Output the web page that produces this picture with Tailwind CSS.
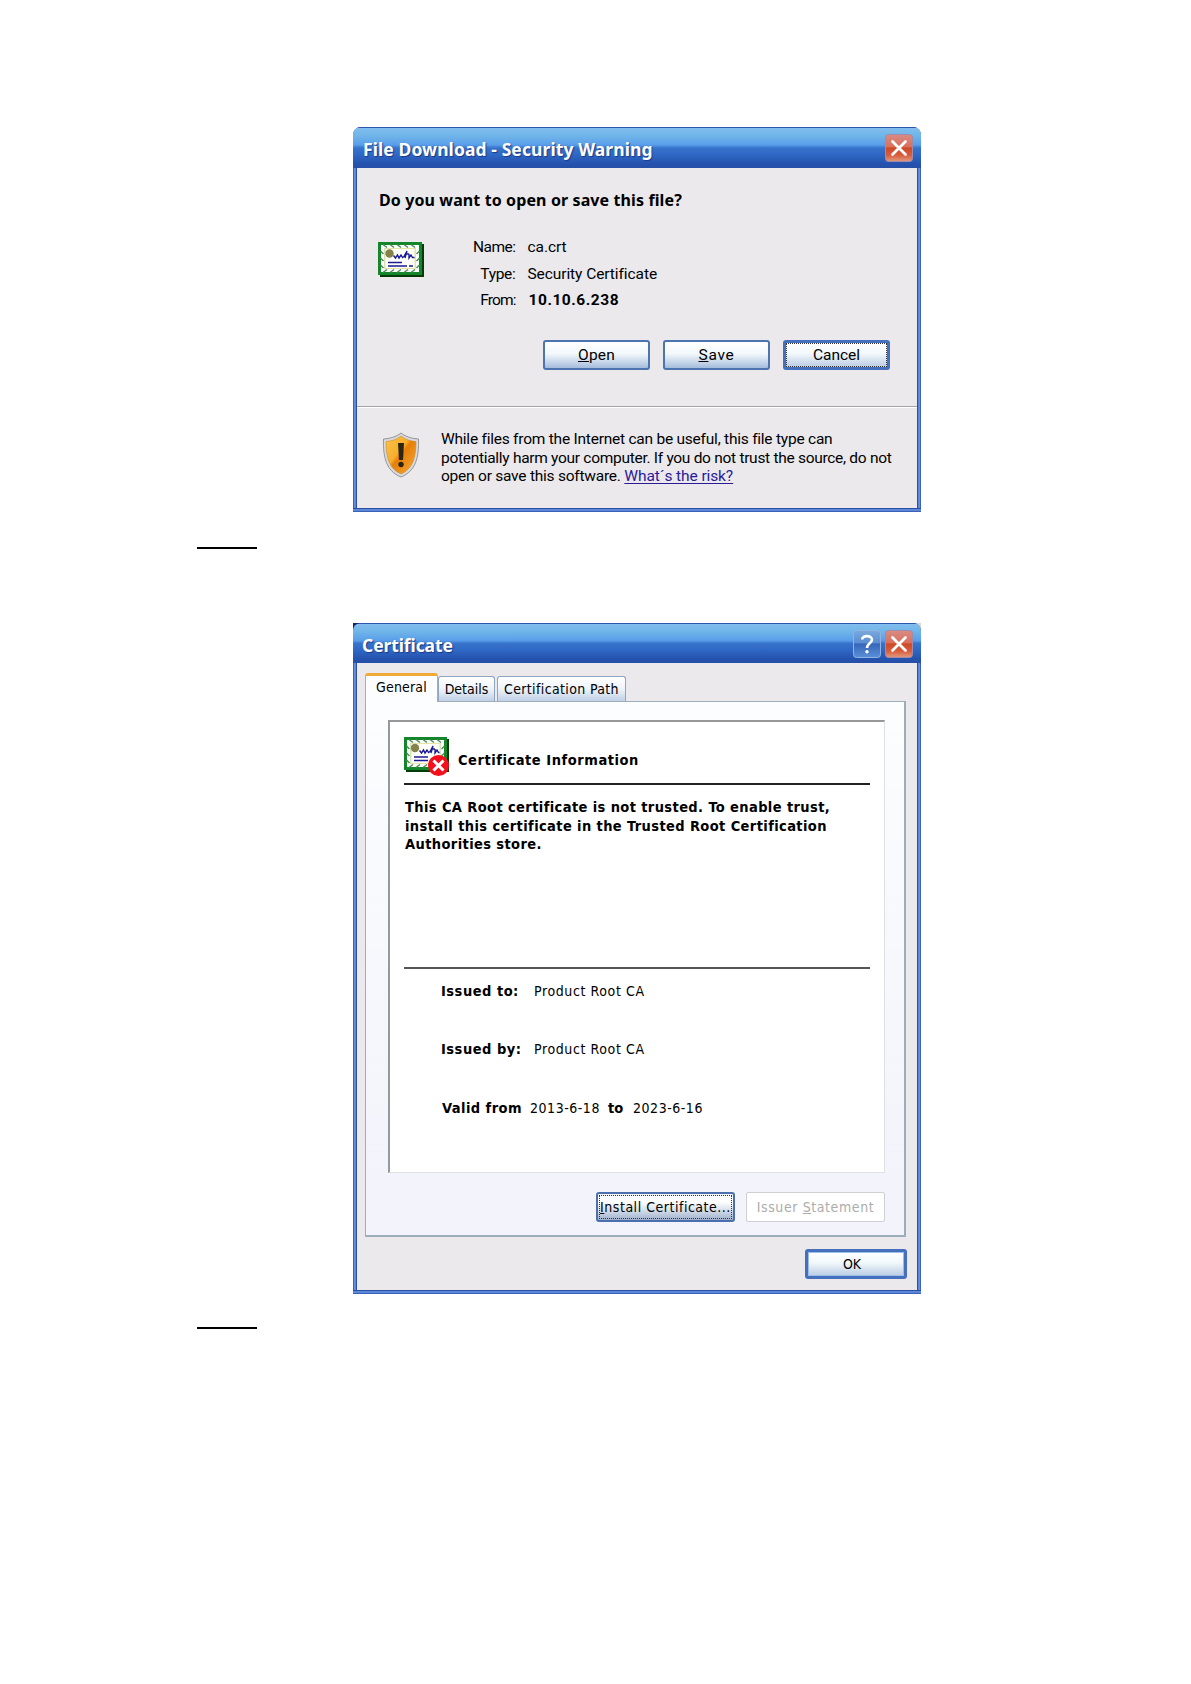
<!DOCTYPE html>
<html lang="en">
<head>
  <meta charset="UTF-8" />
  <meta name="viewport" content="width=device-width, initial-scale=1.0" />
  <title>Certificate Installation</title>
  <script src="https://cdn.jsdelivr.net/npm/@tailwindcss/browser@4"></script>
</head>
<body class="bg-white text-black font-['DejaVu_Sans_Condensed','DejaVu_Sans',sans-serif] whitespace-nowrap">
  <div class="w-[1191px] h-[1684px] pt-[127px] overflow-hidden">

    <!-- File download dialog -->
    <div class="ml-[353px] w-[568px] h-[385px] flex flex-col rounded-t-[8px] overflow-hidden border-b border-[#3a62b8] bg-[linear-gradient(90deg,#3a62b8_0,#3a62b8_1px,#6c93dc_1px,#5580d2_3px,#2c50a4_3px,#2c50a4_565px,#5580d2_565px,#6c93dc_567px,#3a62b8_567px)]">
      <div class="h-[41px] flex items-start justify-between pl-[10px] pr-2 pt-[6px] border-t border-[#2c55ad] bg-[linear-gradient(#82bdee_0,#6fb5e8_20%,#5a9eea_42%,#3673cb_50%,#3069c6_65%,#2452ae_90%,#274fa6_100%)]">
        <span class="mt-[3px] leading-6 font-['Noto_Sans',sans-serif] font-bold text-[17.5px] tracking-[0.09px] text-white [text-shadow:1px_1px_1px_#1a3a86]">File Download - Security Warning</span>
        <svg class="w-7 h-7" viewBox="0 0 28 28">
          <defs>
            <linearGradient id="red" x1="0" y1="0" x2="0" y2="1">
              <stop offset="0" stop-color="#d98c86" />
              <stop offset=".45" stop-color="#d8705a" />
              <stop offset=".5" stop-color="#cf4a25" />
              <stop offset=".75" stop-color="#d95a3a" />
              <stop offset="1" stop-color="#e09a80" />
            </linearGradient>
          </defs>
          <rect x=".5" y=".5" width="27" height="27" rx="3" fill="url(#red)" stroke="#a08aa6" />
          <path d="M7.5 7.5 20.5 20.5M20.5 7.5 7.5 20.5" stroke="#fff" stroke-width="2.800" stroke-linecap="round" />
        </svg>
      </div>
      <div class="mx-1 flex-1 bg-[#ebe9ec] flex flex-col font-[Roboto,sans-serif]">
        <div class="h-[239px] border-b border-[#a5a4a9] pl-[22px] pt-5">
          <p class="leading-6 text-[16px] font-['Noto_Sans',sans-serif] font-bold tracking-[0.11px]">Do you want to open or save this file?</p>
          <div class="flex mt-[22px]">
            <!-- Certificate icon -->
            <svg class="w-[46px] h-[35px] mt-[8px] -ml-px" viewBox="0 0 46 35">
              <path d="M2 2h44v33H2z" fill="#033c08" />
              <path d="M0 0h44v33H0z" fill="#14852a" />
              <rect x="3" y="3" width="38" height="27" fill="#c9e0cb" />
              <rect x="4.500" y="4.500" width="35" height="24" fill="none" stroke="#fff" stroke-width="3" />
              <path d="M5 2.500l4 3M12 2.500l4 3M19 2.500l4 3M26 2.500l4 3M33 2.500l4 3M5 30.500l4-3M12 30.500l4-3M19 30.500l4-3M26 30.500l4-3M33 30.500l4-3M2.500 9l3 3M2.500 16l3 3M2.500 23l3 3M41.500 9l-3 3M41.500 16l-3 3M41.500 23l-3 3" stroke="#4a8f56" stroke-width="1.500" />
              <rect x="7" y="6.500" width="30" height="20" fill="#fffffa" stroke="#e5e5a6" />
              <circle cx="11.500" cy="11.500" r="4.200" fill="#85834b" />
              <path d="M15.500 13.500l2 2.500 2-3 1.500 3 2-3 1.500 2.500 1.500-1 3-5.500-2 7M28 12h3M31 12v4l2-3 1.500 2.500h2" fill="none" stroke="#1b1b96" stroke-width="1.400" />
              <path d="M10 20.500h14M10 24h19M31 24h4" stroke="#1b1b96" stroke-width="1.500" />
            </svg>
            <div class="grid grid-cols-[91.500px_auto] gap-x-3 text-[15.5px] leading-[26.700px] tracking-[-0.08px]">
              <span class="text-right tracking-[-0.5px]">Name:</span><span>ca.crt</span>
              <span class="text-right tracking-[-0.3px]">Type:</span><span>Security Certificate</span>
              <span class="text-right tracking-[-0.9px]">From:</span><b class="pl-px tracking-[0.55px]">10.10.6.238</b>
            </div>
          </div>
          <div class="flex mt-[25.500px] ml-[164px] gap-[13px] text-[15.5px]">
            <button class="w-[107px] h-[30px] rounded-[3px] border-2 border-[#4c74ae] bg-[linear-gradient(#fff,#f2f8fb_45%,#c3d3e8_80%,#a5bcdc)] leading-[27px] tracking-[0.2px]"><u>O</u>pen</button>
            <button class="w-[107px] h-[30px] rounded-[3px] border-2 border-[#4c74ae] bg-[linear-gradient(#fff,#f2f8fb_45%,#c3d3e8_80%,#a5bcdc)] leading-[27px] tracking-[0.7px]"><u>S</u>ave</button>
            <button class="w-[107px] h-[30px] rounded-[3px] border-[3px] border-[#4470bd] bg-[linear-gradient(#fff,#f2f8fb_45%,#c3d3e8_90%)] outline-1 outline-dotted outline-[#333] -outline-offset-4 leading-[25px]">Cancel</button>
          </div>
        </div>
        <div class="flex-1 border-t border-white flex pl-[25px] pt-6">
          <!-- Warning shield -->
          <svg class="w-[38px] h-[46px] shrink-0" viewBox="0 0 38 46">
            <defs>
              <linearGradient id="gold" x1="0" y1="0" x2="1" y2="1">
                <stop offset="0" stop-color="#f9c648" />
                <stop offset=".42" stop-color="#f7ad2c" />
                <stop offset=".5" stop-color="#e67f08" />
                <stop offset="1" stop-color="#f8ac36" />
              </linearGradient>
            </defs>
            <path d="M19 1C14 5 8 6.500 1.500 7C1 25 4 39 19 45C34 39 37 25 36.500 7C30 6.500 24 5 19 1z" fill="#d9dadd" stroke="#92959b" />
            <path d="M19 4C14 8 9 9 4 9.500C4 25 7 37 19 42C31 37 34 25 34 9.500C29 9 24 8 19 4z" fill="url(#gold)" stroke="#c98a2e" stroke-width=".6" />
            <path d="M16 11h6l-1 17h-4z" fill="#2a2515" />
            <circle cx="19" cy="32.500" r="2.700" fill="#2a2515" />
          </svg>
          <div class="ml-[21px] -mt-[2px] text-[15.5px] leading-[18.500px]">
            <p class="tracking-[-0.23px]">While files from the Internet can be useful, this file type can</p>
            <p class="tracking-[-0.29px]">potentially harm your computer. If you do not trust the source, do not</p>
            <p class="tracking-[-0.23px]">open or save this software. <a href="#" class="text-[#2a1a9a] underline underline-offset-2 tracking-[-0.1px]">What´s the risk?</a></p>
          </div>
        </div>
        <div class="h-[3px] -mx-1 border-t border-[#2c50a4] bg-[#5c86d8]"></div>
      </div>
    </div>

    <div class="ml-[197px] mt-[35px] w-[60px] h-0.5 bg-black"></div>

    <!-- Certificate dialog -->
    <div class="ml-[353px] mt-[74px] w-[568px] h-[671px] bg-[linear-gradient(90deg,#16245c_50%,#d8dcd4_50%)]">
      <div class="h-full flex flex-col rounded-t-[8px] overflow-hidden border-b border-[#3a62b8] bg-[linear-gradient(90deg,#3a62b8_0,#3a62b8_1px,#6c93dc_1px,#5580d2_3px,#2c50a4_3px,#2c50a4_565px,#5580d2_565px,#6c93dc_567px,#3a62b8_567px)]">
        <div class="h-10 flex items-start pl-[9px] pr-2 pt-[6px] border-t border-[#2c55ad] bg-[linear-gradient(#82bdee_0,#6fb5e8_20%,#5a9eea_42%,#3673cb_50%,#3069c6_65%,#2452ae_90%,#274fa6_100%)]">
          <span class="flex-1 mt-[3px] leading-6 font-['Noto_Sans',sans-serif] font-bold text-[17.5px] tracking-[-0.1px] text-white [text-shadow:1px_1px_1px_#1a3a86]">Certificate</span>
          <svg class="w-7 h-7 mr-1" viewBox="0 0 28 28">
            <defs>
              <linearGradient id="blue" x1="0" y1="0" x2="0" y2="1">
                <stop offset="0" stop-color="#7ba9dd" />
                <stop offset=".45" stop-color="#5b8ed2" />
                <stop offset=".5" stop-color="#3566b8" />
                <stop offset="1" stop-color="#5c8fd8" />
              </linearGradient>
            </defs>
            <rect x=".5" y=".5" width="27" height="27" rx="3" fill="url(#blue)" stroke="#8fb4e2" />
            <path d="M9.200 9.500C9.200 5 19 5 19 9.800C19 13 14 13 14 18" fill="none" stroke="#fff" stroke-width="2.600" />
            <circle cx="14" cy="21.800" r="1.700" fill="#fff" />
          </svg>
          <svg class="w-7 h-7" viewBox="0 0 28 28">
            <rect x=".5" y=".5" width="27" height="27" rx="3" fill="url(#red)" stroke="#a08aa6" />
            <path d="M7.5 7.5 20.5 20.5M20.5 7.5 7.5 20.5" stroke="#fff" stroke-width="2.800" stroke-linecap="round" />
          </svg>
        </div>
        <div class="mx-1 flex-1 bg-[#ebe9ec] px-2 pt-[10px] text-[14px]">
          <!-- Tabs -->
          <div class="flex items-end h-7">
            <div class="w-[73px] h-[29px] -mb-px relative rounded-t-[3px] border-x border-x-[#9db0c0] border-t-[3px] border-t-[#f0aa3a] bg-[#fcfdfe] text-center leading-[22px] tracking-[0.19px]">General</div>
            <div class="w-[57px] h-[25px] rounded-t-[3px] border border-b-0 border-[#8fa5c0] bg-[linear-gradient(#fff,#eef3fa_50%,#c0d0e6)] text-center leading-[25px]">Details</div>
            <div class="ml-[2px] w-[129px] h-[25px] rounded-t-[3px] border border-b-0 border-[#8fa5c0] bg-[linear-gradient(#fff,#eef3fa_50%,#c0d0e6)] text-center leading-[25px] tracking-[0.36px]">Certification Path</div>
          </div>
          <div class="w-[541px] h-[536px] border border-r-2 border-b-2 border-[#9eadba] bg-[linear-gradient(#fcfdfe,#f2f3fb)] pl-[22px] pt-[18px]">
            <div class="w-[497px] h-[453px] bg-white border border-t-2 border-l-2 border-[#dfe0e2] border-t-[#97989a] border-l-[#97989a] pl-[14px] pt-[15px]">
              <div class="flex h-[48px] w-[466px] border-b-2 border-[#222]">
                <svg class="w-[46px] h-[40px]" viewBox="0 0 46 40">
                  <path d="M2 2h43v33H2z" fill="#033c08" />
                  <path d="M0 0h43v33H0z" fill="#14852a" />
                  <rect x="3" y="3" width="37" height="27" fill="#c9e0cb" />
                  <rect x="4.500" y="4.500" width="34" height="24" fill="none" stroke="#fff" stroke-width="3" />
                  <path d="M5 2.500l4 3M12 2.500l4 3M19 2.500l4 3M26 2.500l4 3M33 2.500l4 3M5 30.500l4-3M12 30.500l4-3M19 30.500l4-3M2.500 9l3 3M2.500 16l3 3M2.500 23l3 3M40.500 9l-3 3M40.500 16l-3 3" stroke="#4a8f56" stroke-width="1.500" />
                  <rect x="7" y="6.500" width="29" height="20" fill="#fffffa" stroke="#e5e5a6" />
                  <circle cx="11" cy="11" r="4.200" fill="#85834b" />
                  <path d="M15.500 13.500l2 2.500 2-3 1.500 3 2-3 1.500 2.500 1.500-1 3-5.500-2 7M28 12h3M31 12v4l2-3 1.500 2.500h1" fill="none" stroke="#1b1b96" stroke-width="1.400" />
                  <path d="M10 20h14M10 23.500h14" stroke="#1b1b96" stroke-width="1.500" />
                  <circle cx="34.500" cy="28.500" r="10.500" fill="#f3101c" />
                  <path d="M29.500 23.500l10 10M39.500 23.500l-10 10" stroke="#fff" stroke-width="3" />
                </svg>
                <b class="ml-2 mt-[11px] leading-6 text-[14.5px] tracking-[0.54px]">Certificate Information</b>
              </div>
              <div class="h-[169px] pl-px pt-[13px] font-bold text-[14.5px] leading-[18.500px] tracking-[0.39px]">
                <p>This CA Root certificate is not trusted. To enable trust,</p>
                <p>install this certificate in the Trusted Root Certification</p>
                <p>Authorities store.</p>
              </div>
              <div class="w-[466px] mt-[13px] border-t-2 border-[#555] pl-[37px] pt-[10px] leading-6 tracking-[0.6px]">
                <div class="h-[58px] flex"><b class="w-[93px] text-[14.5px] tracking-[0.5px]">Issued to:</b><span>Product Root CA</span></div>
                <div class="h-[58.500px] flex"><b class="w-[93px] text-[14.5px] tracking-[0.5px]">Issued by:</b><span>Product Root CA</span></div>
                <div class="flex tracking-[0.53px]">
                  <b class="w-[89px] pl-px text-[14.5px] tracking-[0.44px]">Valid from</b>
                  <span class="w-[78px]">2013-6-18</span>
                  <b class="w-[25px] text-[14.5px] tracking-normal">to</b>
                  <span>2023-6-16</span>
                </div>
              </div>
            </div>
            <div class="flex mt-[19px] ml-[208px] gap-[11px]">
              <button class="w-[139px] h-[30px] rounded-[3px] border-2 border-[#4c6fae] bg-[linear-gradient(#f4f6fa,#fff_30%,#d8e2ec_60%,#9fb0cc)] outline-1 outline-dotted outline-[#333] -outline-offset-4 leading-[27px] tracking-[0.52px]"><u>I</u>nstall Certificate...</button>
              <button class="w-[139px] h-[30px] rounded-[2px] border border-[#cfcfd4] bg-white text-[#acacac] leading-[29px] tracking-[0.6px]">Issuer <u>S</u>tatement</button>
            </div>
          </div>
          <button class="block ml-[440px] mt-3 w-[102px] h-[30px] rounded-[3px] border-[3px] border-[#4470bd] shadow-[inset_0_0_0_1px_#9dbcea] bg-[linear-gradient(#fff,#f2f8fb_45%,#c3d3e8_90%)] pr-2 leading-[25px]">OK</button>
        </div>
        <div class="h-[3px] border-t border-[#2c50a4] bg-[#5c86d8]"></div>
      </div>
    </div>

    <div class="ml-[197px] mt-[33px] w-[60px] h-0.5 bg-black"></div>
  </div>
</body>
</html>
